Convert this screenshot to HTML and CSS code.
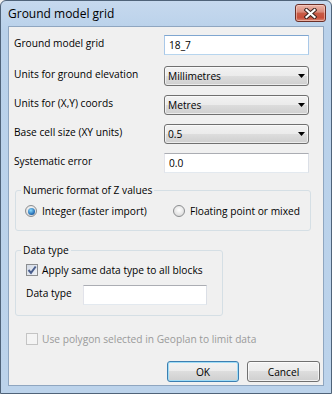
FILE: index.html
```html
<!DOCTYPE html>
<html lang="en">
<head>
    <meta charset="UTF-8">
    <title>Ground model grid</title>
    <link rel="stylesheet" href="styles.css">
</head>
<body>
    <div class="dialog">
        <div class="titlebar">
            <span class="title">Ground model grid</span>
            <button class="close-btn" aria-label="Close">
                <svg width="13" height="11" viewBox="0 0 13 11">
                    <path d="M2.5 2 L10.5 9 M10.5 2 L2.5 9" stroke="#3b2420" stroke-width="4.2" stroke-linecap="square" fill="none"/>
                    <path d="M2.5 2 L10.5 9 M10.5 2 L2.5 9" stroke="#fff" stroke-width="2.2" stroke-linecap="square" fill="none"/>
                </svg>
            </button>
        </div>

        <div class="client">
            <div class="field-row first">
                <label>Ground model grid</label>
                <input class="textbox focused" type="text" value="18_7">
            </div>
            <div class="field-row">
                <label>Units for ground elevation</label>
                <div class="combo"><span>Millimetres</span><svg width="7" height="4" viewBox="0 0 7 4"><polygon points="0,0 7,0 3.5,4" fill="#000"/></svg></div>
            </div>
            <div class="field-row">
                <label>Units for (X,Y) coords</label>
                <div class="combo"><span>Metres</span><svg width="7" height="4" viewBox="0 0 7 4"><polygon points="0,0 7,0 3.5,4" fill="#000"/></svg></div>
            </div>
            <div class="field-row">
                <label>Base cell size (XY units)</label>
                <div class="combo"><span>0.5</span><svg width="7" height="4" viewBox="0 0 7 4"><polygon points="0,0 7,0 3.5,4" fill="#000"/></svg></div>
            </div>
            <div class="field-row">
                <label>Systematic error</label>
                <input class="textbox" type="text" value="0.0">
            </div>

            <fieldset class="group group-z">
                <legend>Numeric format of Z values</legend>
                <div class="radio-row">
                    <label class="option"><span class="radio checked"></span>Integer (faster import)</label>
                    <label class="option"><span class="radio"></span>Floating point or mixed</label>
                </div>
            </fieldset>

            <fieldset class="group group-type">
                <legend>Data type</legend>
                <label class="option check-row">
                    <span class="check">
                        <svg width="10" height="10" viewBox="0 0 10 10"><path d="M1.5 5 L4 7.8 L8.7 1.5" stroke="#4a5e8c" stroke-width="2" fill="none"/></svg>
                    </span>Apply same data type to all blocks
                </label>
                <div class="type-row">
                    <label>Data type</label>
                    <input class="textbox" type="text" value="">
                </div>
            </fieldset>

            <label class="option disabled"><span class="check off"></span>Use polygon selected in Geoplan to limit data</label>

            <div class="buttons">
                <button class="btn default">OK</button>
                <button class="btn cancel">Cancel</button>
            </div>
        </div>
    </div>
</body>
</html>
```

FILE: styles.css
```css
* {
    box-sizing: border-box;
}
body {
    margin: 0;
    font-family: "Open Sans", "Noto Sans", sans-serif;
    font-size: 10.2px;
    line-height: 16px;
    color: #000;
    background-color: #f0f0f0;
    white-space: nowrap;
}
.dialog {
    width: 332px;
    height: 394px;
    border: 1px solid #4f6379;
    border-radius: 6px 6px 0 0;
    background: linear-gradient(to bottom, #c6d9ee, #b9d1ea 30px, #bcd3eb);
    padding: 0 7px 7px 7px;
    display: flex;
    flex-direction: column;
}
.titlebar {
    height: 25px;
    display: flex;
    align-items: flex-start;
    justify-content: space-between;
}
.title {
    font-size: 12px;
    line-height: 25px;
}
.close-btn {
    width: 31px;
    height: 18px;
    margin-top: 3px;
    margin-right: -2px;
    padding: 0;
    border: 1px solid #6b2f27;
    border-radius: 3px;
    background: linear-gradient(to bottom, #eab6aa, #d98a7a 45%, #c75c46 50%, #c84f3a 80%, #d98d7b);
    box-shadow: inset 0 0 0 1px rgba(255, 220, 210, 0.5);
    display: flex;
    align-items: center;
    justify-content: center;
}
.client {
    flex: 1;
    background-color: #f0f0f0;
    border: 1px solid #8fa6c0;
    padding: 8px 3px 0 5px;
}
.field-row {
    display: grid;
    grid-template-columns: 150px 145px;
    align-items: start;
    height: 20px;
    margin-bottom: 9px;
}
.field-row.first {
    margin-bottom: 11px;
}
.textbox {
    height: 20px;
    width: 100%;
    margin: 0;
    padding: 0 4px;
    font: inherit;
    color: #000;
    background: white;
    border: 1px solid;
    border-color: #abadb3 #dbdfe6 #e3e9ef #e2e3ea;
    outline: none;
}
.textbox.focused {
    border-color: #7fa6d0 #a9c8e8 #b7d5ee #a9c8e8;
}
.combo {
    height: 20px;
    display: flex;
    align-items: center;
    justify-content: space-between;
    padding: 0 3px 0 3px;
    border: 1px solid #707070;
    border-radius: 3px;
    background: linear-gradient(to bottom, #f2f2f2, #ebebeb 50%, #dddddd 50%, #cfcfcf);
    box-shadow: inset 0 0 0 1px rgba(255, 255, 255, 0.6);
}
.group {
    margin: 2px 0 0 1px;
    padding: 0 0 11px 5px;
    border: 1px solid #d5dfe5;
    border-radius: 3px;
}
.group legend {
    padding: 0 2px;
    line-height: 16px;
}
.group-z {
    width: 296px;
}
.group-type {
    width: 208px;
    margin-top: 11px;
    padding-bottom: 10px;
}
.radio-row {
    display: grid;
    grid-template-columns: 148px auto;
    margin-top: 5px;
    padding-left: 4px;
}
.option {
    display: flex;
    align-items: center;
    gap: 5px;
    line-height: 16px;
}
.radio {
    width: 12px;
    height: 12px;
    border-radius: 50%;
    border: 1px solid #8c8e90;
    background: radial-gradient(circle at 50% 40%, #ffffff, #e4e4e4 60%, #cfcfcf);
    display: flex;
    align-items: center;
    justify-content: center;
}
.radio.checked::after {
    content: "";
    width: 7px;
    height: 7px;
    border-radius: 50%;
    background: radial-gradient(circle at 40% 35%, #8adcff, #2a73b8 60%, #103e78);
}
.check {
    width: 12px;
    height: 12px;
    border: 1px solid #8c8e90;
    background: linear-gradient(135deg, #d3dae6, #eef1f6);
    display: flex;
    align-items: center;
    justify-content: center;
}
.check-row {
    margin-top: 4px;
    padding-left: 5px;
    gap: 4px;
}
.type-row {
    display: grid;
    grid-template-columns: 57px 124px;
    margin-top: 7px;
    padding-left: 5px;
}
.disabled {
    color: #9a9a9a;
    margin-top: 15px;
    padding-left: 12px;
    gap: 4px;
}
.check.off {
    border-color: #c4c4c4;
    background: #f4f4f4;
}
.buttons {
    display: flex;
    justify-content: flex-end;
    gap: 8px;
    margin-top: 14px;
}
.btn {
    height: 21px;
    width: 73px;
    padding: 0;
    font: inherit;
    color: #000;
    border: 1px solid #707070;
    border-radius: 3px;
    background: linear-gradient(to bottom, #f2f2f2, #ebebeb 50%, #dddddd 50%, #cfcfcf);
    box-shadow: inset 0 0 0 1px rgba(255, 255, 255, 0.7);
}
.btn.default {
    width: 72px;
    border-color: #3c7fb1;
    box-shadow: inset 0 0 0 1px #9fdcf6;
}
```
